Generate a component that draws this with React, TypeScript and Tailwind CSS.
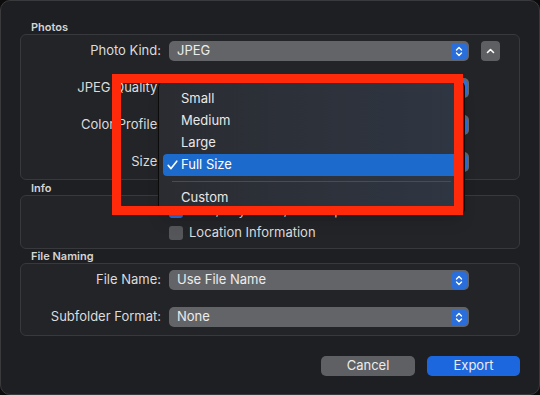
import type { ReactNode } from "react";

const font = { fontFamily: "Inter, 'Liberation Sans', sans-serif" };

/** Blue up/down stepper at the right end of a popup button. */
function Stepper() {
  return (
    <span className="grid h-[17px] w-[16px] place-items-center rounded-[4px] bg-[#2a6edb]">
      <svg width="8" height="11" viewBox="0 0 8 11" fill="none" stroke="white" strokeWidth="1.4" strokeLinecap="round" strokeLinejoin="round">
        <path d="M1.5 4 L4 1.5 L6.5 4" />
        <path d="M1.5 7 L4 9.5 L6.5 7" />
      </svg>
    </span>
  );
}

function Popup({ value }: { value?: string }) {
  return (
    <div className="flex h-[20px] w-[300px] items-center justify-between rounded-[5px] bg-[#636467] pl-[8px] pr-[2px] text-[13px] text-[#ececec]">
      <span>{value}</span>
      <Stepper />
    </div>
  );
}

function Row({ label, value, children }: { label: string; value?: string; children?: ReactNode }) {
  return (
    <div className="flex h-[20px] items-center">
      <div className="w-[148px] pr-[8px] text-right text-[13px] text-[#dcdcdc]">{label}</div>
      <Popup value={value} />
      {children}
    </div>
  );
}

function Section({ title, children, className }: { title: string; children: ReactNode; className: string }) {
  return (
    <div>
      <div className="h-[14px] pl-[11px] text-[11px] font-semibold leading-[14px] text-[#d4d4d4]">{title}</div>
      <div className={"rounded-[6px] border border-[#38393d] bg-[#232428] " + className}>{children}</div>
    </div>
  );
}

function Check({ on, label }: { on?: boolean; label: string }) {
  return (
    <div className="flex h-[14px] items-center pl-[148px]">
      <span className={"h-[14px] w-[14px] rounded-[3px] " + (on ? "bg-[#2a6edb]" : "bg-[#55565a]")} />
      <span className="ml-[6px] text-[13px] text-[#dcdcdc]">{label}</span>
    </div>
  );
}

const items = ["Small", "Medium", "Large", "Full Size"];

export default function App() {
  return (
    <div className="relative h-[395px] w-[540px] overflow-hidden bg-[#0c0c0d]" style={font}>
      <div className="h-full rounded-[10px] border border-[#3a3a3d] bg-[#1e1f23] px-[19px] pt-[19px]">
        <Section title="Photos" className="flex h-[146px] flex-col gap-[17px] pt-[6px]">
          <Row label="Photo Kind:" value="JPEG">
            <span className="ml-[12px] grid h-[20px] w-[19px] place-items-center rounded-[4px] bg-[#5e5f62]">
              <svg width="9" height="6" viewBox="0 0 9 6" fill="none" stroke="white" strokeWidth="1.6" strokeLinecap="round" strokeLinejoin="round">
                <path d="M1.5 4.5 L4.5 1.5 L7.5 4.5" />
              </svg>
            </span>
          </Row>
          <Row label="JPEG Quality:" />
          <Row label="Color Profile:" />
          <Row label="Size:" />
        </Section>

        <div className="mt-[1px]">
          <Section title="Info" className="flex h-[54px] flex-col gap-[8px] pt-[8px]">
            <Check on label="Title, Keywords, and Caption" />
            <Check label="Location Information" />
          </Section>
        </div>

        <Section title="File Naming" className="flex h-[73px] flex-col gap-[17px] pt-[6px]">
          <Row label="File Name:" value="Use File Name" />
          <Row label="Subfolder Format:" value="None" />
        </Section>

        <div className="mt-[20px] flex justify-end gap-[12px] text-[13px] text-[#ececec]">
          <button className="h-[20px] w-[94px] rounded-[5px] bg-[#5f6063]">Cancel</button>
          <button className="h-[20px] w-[93px] rounded-[5px] bg-[#1d67de]">Export</button>
        </div>
      </div>

      {/* open size menu */}
      <div className="absolute left-[158px] top-[81px] h-[134px] w-[307px] rounded-[6px] border border-[#0b0b0c] bg-gradient-to-r from-[#2a2c31] to-[#2f3643] px-[4px] pt-[6px] text-[13px] text-[#e8e8e8] shadow-lg">
        {items.map((it) => (
          <div
            key={it}
            className={
              "flex h-[22px] items-center rounded-[4px] " + (it === "Full Size" ? "bg-[#1d6acd] text-white" : "")
            }
          >
            <span className="flex w-[18px] justify-center">
              {it === "Full Size" && (
                <svg width="11" height="10" viewBox="0 0 11 10" fill="none" stroke="white" strokeWidth="1.6" strokeLinecap="round" strokeLinejoin="round">
                  <path d="M1.2 5.4 L4 8.6 L9.8 1.2" />
                </svg>
              )}
            </span>
            <span>{it}</span>
          </div>
        ))}
        <div className="mx-[9px] my-[5px] h-px bg-[#4a4c52]" />
        <div className="flex h-[22px] items-center pl-[18px]">Custom</div>
      </div>

      {/* annotation frame */}
      <div className="absolute left-[112px] top-[74px] h-[141px] w-[351px] border-[9px] border-[#ff2a0a]" />
    </div>
  );
}
